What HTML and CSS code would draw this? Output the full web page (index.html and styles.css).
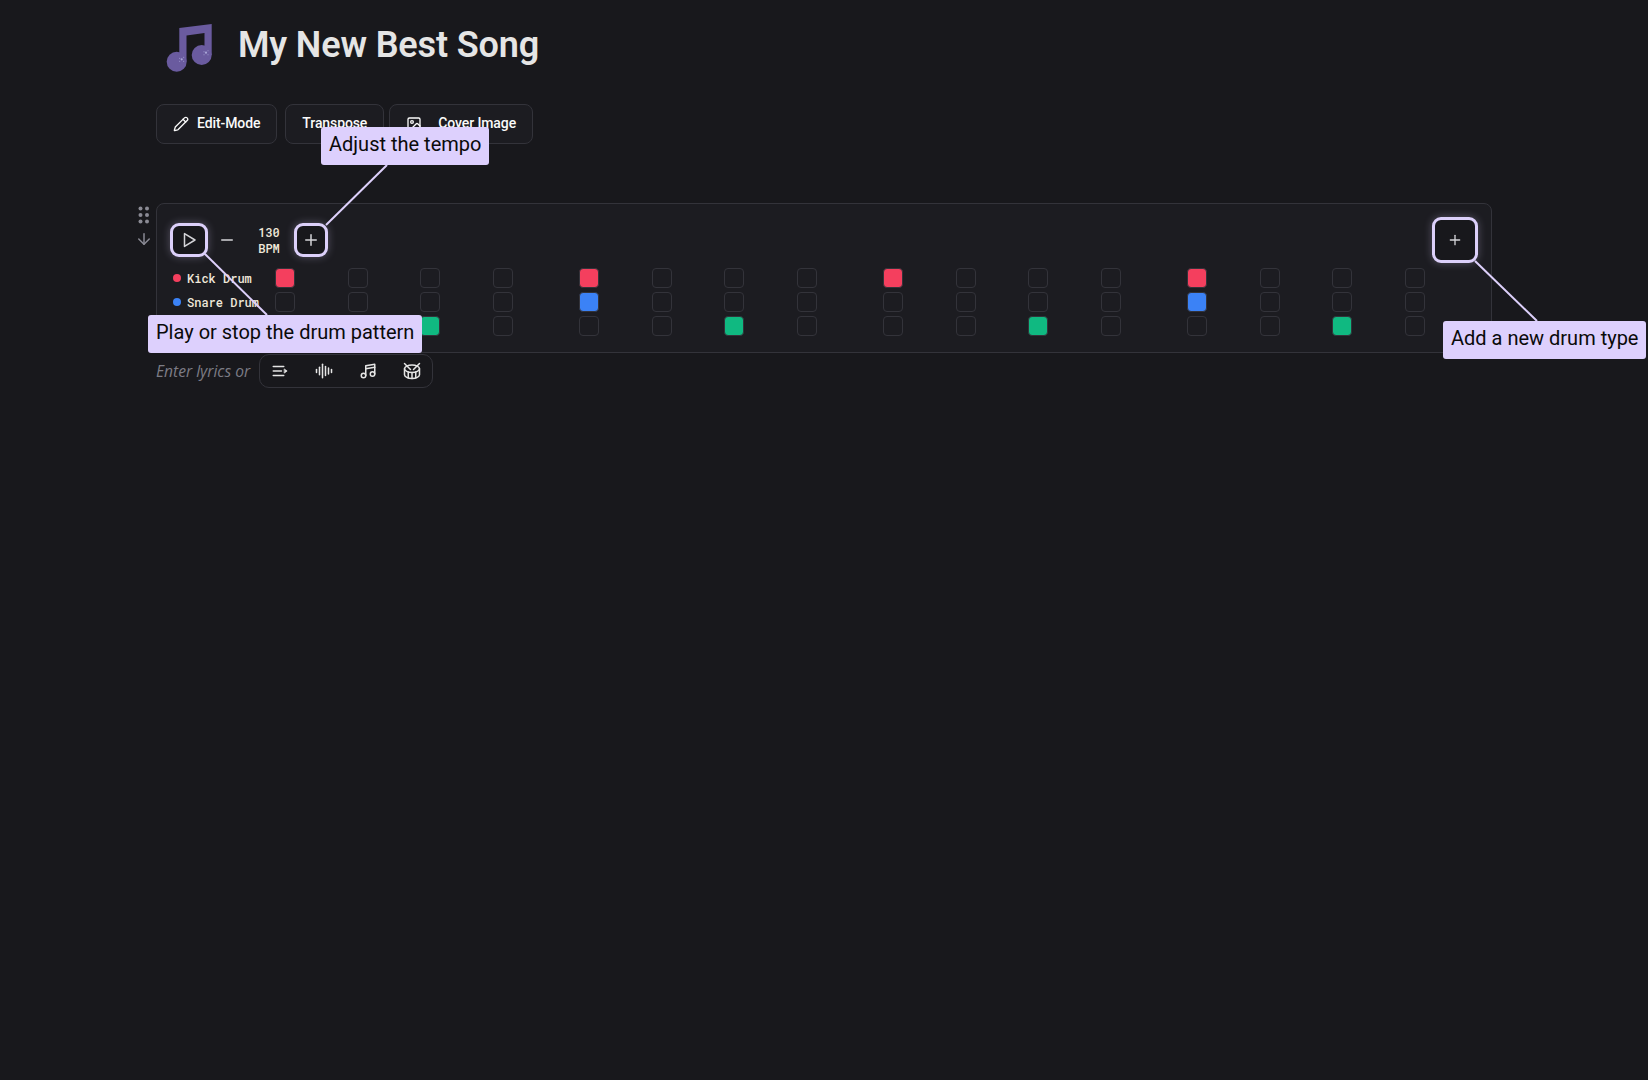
FILE: index.html
```html
<!DOCTYPE html>
<html>
<head>
    <title>My New Best Song</title>
    <link rel="stylesheet" href="styles.css">
</head>
<body>
    <div class="page">
        <div class="song_header">
            <svg class="song_icon" width="50" height="50" viewBox="0 0 50 50">
                <path fill="#6a5b9f" d="M14.3 6 46.7 2V33H39.5V11L21.5 13.5V39.5H14.3Z"/>
                <circle fill="#6a5b9f" cx="11.7" cy="39.7" r="10"/>
                <circle fill="#6a5b9f" cx="36.7" cy="33" r="10"/>
                <g fill="#a9a6d8">
                    <circle cx="16.7" cy="37.3" r="1.1"/>
                    <circle cx="14.7" cy="36.3" r=".5"/>
                    <circle cx="18.7" cy="39.3" r=".5"/>
                    <circle cx="18.7" cy="35.3" r=".5"/>
                    <circle cx="14.7" cy="39.3" r=".5"/>
                    <circle cx="41" cy="30.7" r="1.1"/>
                    <circle cx="39" cy="29.7" r=".5"/>
                    <circle cx="43" cy="32.7" r=".5"/>
                    <circle cx="43" cy="28.7" r=".5"/>
                    <circle cx="39" cy="32.7" r=".5"/>
                </g>
            </svg>
            <h1>My New Best Song</h1>
        </div>

        <div class="song_actions">
            <button class="action_btn">
                <svg class="icon" viewBox="0 0 24 24"><path d="M21.2 6.8a2.8 2.8 0 0 0-4-4L3.8 16.2a2 2 0 0 0-.5.8l-1.3 4.4a.5.5 0 0 0 .6.6l4.4-1.3a2 2 0 0 0 .8-.5z"/><path d="m15 5 4 4"/></svg>
                <span>Edit-Mode</span>
            </button>
            <button class="action_btn transpose_btn"><span>Transpose</span></button>
            <button class="action_btn wide_gap">
                <svg class="icon" viewBox="0 0 24 24"><rect x="3" y="3" width="18" height="18" rx="2"/><circle cx="9" cy="9" r="2"/><path d="m21 15-3.1-3.1a2 2 0 0 0-2.8 0L6 21"/></svg>
                <span>Cover Image</span>
            </button>
        </div>

        <div class="block_wrapper">
            <div class="block_handle">
                <svg width="12" height="18" viewBox="0 0 12 18" fill="#8a8a94">
                    <circle cx="2.5" cy="2.5" r="2"/><circle cx="9" cy="2.5" r="2"/>
                    <circle cx="2.5" cy="9" r="2"/><circle cx="9" cy="9" r="2"/>
                    <circle cx="2.5" cy="15.5" r="2"/><circle cx="9" cy="15.5" r="2"/>
                </svg>
                <svg class="icon handle_arrow" viewBox="0 0 24 24"><path d="M12 5v14"/><path d="m19 12-7 7-7-7"/></svg>
            </div>

            <div class="drum_card">
                <div class="drum_controls">
                    <button class="ctrl_btn highlighted play_btn">
                        <svg class="icon" viewBox="0 0 24 24"><path d="M6 3.5v17l14-8.5z"/></svg>
                    </button>
                    <button class="ctrl_btn minus_btn">
                        <svg class="icon" viewBox="0 0 24 24"><path d="M5 12h14"/></svg>
                    </button>
                    <div class="bpm">130<br>BPM</div>
                    <button class="ctrl_btn highlighted plus_btn">
                        <svg class="icon" viewBox="0 0 24 24"><path d="M5 12h14"/><path d="M12 5v14"/></svg>
                    </button>
                    <button class="ctrl_btn highlighted add_btn">
                        <svg class="icon" viewBox="0 0 24 24"><path d="M5 12h14"/><path d="M12 5v14"/></svg>
                    </button>
                </div>

                <div class="drum_row">
                    <div class="drum_label"><span class="dot kick"></span>Kick Drum</div>
                    <div class="beat_group"><span class="cell kick"></span><span class="cell"></span><span class="cell"></span><span class="cell"></span></div>
                    <div class="beat_group"><span class="cell kick"></span><span class="cell"></span><span class="cell"></span><span class="cell"></span></div>
                    <div class="beat_group"><span class="cell kick"></span><span class="cell"></span><span class="cell"></span><span class="cell"></span></div>
                    <div class="beat_group"><span class="cell kick"></span><span class="cell"></span><span class="cell"></span><span class="cell"></span></div>
                </div>
                <div class="drum_row">
                    <div class="drum_label"><span class="dot snare"></span>Snare Drum</div>
                    <div class="beat_group"><span class="cell"></span><span class="cell"></span><span class="cell"></span><span class="cell"></span></div>
                    <div class="beat_group"><span class="cell snare"></span><span class="cell"></span><span class="cell"></span><span class="cell"></span></div>
                    <div class="beat_group"><span class="cell"></span><span class="cell"></span><span class="cell"></span><span class="cell"></span></div>
                    <div class="beat_group"><span class="cell snare"></span><span class="cell"></span><span class="cell"></span><span class="cell"></span></div>
                </div>
                <div class="drum_row">
                    <div class="drum_label"><span class="dot hihat"></span>Hi-Hat</div>
                    <div class="beat_group"><span class="cell"></span><span class="cell"></span><span class="cell hihat"></span><span class="cell"></span></div>
                    <div class="beat_group"><span class="cell"></span><span class="cell"></span><span class="cell hihat"></span><span class="cell"></span></div>
                    <div class="beat_group"><span class="cell"></span><span class="cell"></span><span class="cell hihat"></span><span class="cell"></span></div>
                    <div class="beat_group"><span class="cell"></span><span class="cell"></span><span class="cell hihat"></span><span class="cell"></span></div>
                </div>
            </div>
        </div>

        <div class="lyrics_row">
            <span class="lyrics_hint">Enter lyrics or</span>
            <div class="block_picker">
                <button class="picker_btn">
                    <svg class="icon" viewBox="0 0 24 24"><path d="M3 6h14"/><path d="M3 12h11"/><path d="M3 18h14"/><path class="solid" d="M18 9.5l3.5 2.5-3.5 2.5z"/></svg>
                </button>
                <button class="picker_btn">
                    <svg class="icon" viewBox="0 0 24 24"><path d="M2 10v4"/><path d="M6 7v10"/><path d="M10 3v18"/><path d="M14 6v12"/><path d="M18 8v8"/><path d="M22 10v4"/></svg>
                </button>
                <button class="picker_btn">
                    <svg class="icon" viewBox="0 0 24 24"><path d="M9 18V5l12-2v13"/><path d="m9 9 12-2"/><circle cx="6" cy="18" r="3"/><circle cx="18" cy="16" r="3"/></svg>
                </button>
                <button class="picker_btn">
                    <svg class="icon" viewBox="0 0 24 24"><path d="m2 2 8 8"/><path d="m22 2-8 8"/><ellipse cx="12" cy="9" rx="10" ry="5"/><path d="M7 13.4v7.9"/><path d="M12 14v8"/><path d="M17 13.4v7.9"/><path d="M2 9v8a10 5 0 0 0 20 0V9"/></svg>
                </button>
            </div>
        </div>
    </div>

    <!-- guide lines from the tooltips to their buttons -->
    <svg class="guide_lines" width="1648" height="1080">
        <line x1="387" y1="165" x2="326" y2="225"/>
        <line x1="205" y1="254" x2="267" y2="315"/>
        <line x1="1475" y1="261" x2="1537" y2="321"/>
    </svg>
    <div class="tip tip_tempo">Adjust the tempo</div>
    <div class="tip tip_play">Play or stop the drum pattern</div>
    <div class="tip tip_add">Add a new drum type</div>
</body>
</html>
```

FILE: styles.css
```css
body {
    margin: 0;
    height: 1080px;
    overflow: hidden;
    position: relative;
    background-color: #18181c;
    color: #e5e5e5;
    font-family: Roboto, "Noto Sans", sans-serif;
}

button {
    font-family: inherit;
    color: inherit;
    background: none;
    border: none;
    padding: 0;
}

.page {
    width: 1336px;
    margin-left: 156px;
}

.icon {
    width: 18px;
    height: 18px;
    fill: none;
    stroke: currentColor;
    stroke-width: 2;
    stroke-linecap: round;
    stroke-linejoin: round;
    flex-shrink: 0;
}

.icon .solid {
    fill: currentColor;
    stroke-width: 1;
}

/* header */
.song_header {
    display: flex;
    align-items: center;
    height: 90px;
    padding-left: 9px;
    gap: 23px;
}

.song_icon {
    flex-shrink: 0;
    margin-top: 4px;
}

h1 {
    margin: 0;
    font-size: 36px;
    font-weight: 600;
    letter-spacing: -0.15px;
    line-height: 40px;
    color: #e5e5e5;
}

.song_actions {
    display: flex;
    gap: 8px;
    margin-top: 14px;
}

.action_btn {
    display: flex;
    align-items: center;
    gap: 8px;
    height: 40px;
    padding: 0 16px;
    box-sizing: border-box;
    border: 1px solid #33333a;
    border-radius: 8px;
    background-color: #1c1c21;
    color: #fafafa;
    font-size: 14px;
    font-weight: 500;
    letter-spacing: -0.1px;
}

.action_btn span {
    margin-bottom: 2px;
}

.action_btn .icon {
    width: 16px;
    height: 16px;
}

.transpose_btn {
    margin-right: -3px;
}

.action_btn.wide_gap {
    gap: 16px;
}

/* drum block */
.block_wrapper {
    position: relative;
    margin-top: 59px;
}

.block_handle {
    position: absolute;
    left: -18px;
    top: 3px;
    width: 12px;
    display: flex;
    flex-direction: column;
    align-items: center;
    gap: 6px;
    color: #8a8a94;
}

.drum_card {
    height: 150px;
    box-sizing: border-box;
    padding: 13px 13px 0;
    border: 1px solid #33333a;
    border-radius: 8px;
    background-color: #1c1c21;
}

.drum_controls {
    display: flex;
    align-items: center;
    height: 46px;
    margin-bottom: 5px;
}

.ctrl_btn {
    display: flex;
    align-items: center;
    justify-content: center;
    width: 34px;
    height: 34px;
    box-sizing: border-box;
    color: #d4d4d8;
}

.highlighted {
    border: 3px solid #dcd0fa;
    border-radius: 9px;
    background-color: #18181c;
    box-shadow: 0 0 8px rgba(221, 208, 251, 0.3);
}

.play_btn {
    width: 38px;
}

.minus_btn {
    margin-left: 2px;
}

.add_btn {
    width: 46px;
    height: 46px;
    margin-left: auto;
}

.add_btn .icon {
    width: 16px;
    height: 16px;
}

.bpm {
    width: 50px;
    text-align: center;
    font-family: "Roboto Mono", "DejaVu Sans Mono", monospace;
    font-size: 12px;
    font-weight: 500;
    line-height: 16px;
    color: #f0e8da;
}

.drum_row {
    display: flex;
    align-items: center;
    gap: 66.5px;
    height: 20px;
    margin-bottom: 4px;
}

.drum_label {
    display: flex;
    align-items: center;
    gap: 6px;
    width: 105px;
    margin-right: -66.5px;
    padding-left: 3px;
    box-sizing: border-box;
    font-family: "Roboto Mono", "DejaVu Sans Mono", monospace;
    font-size: 12px;
    font-weight: 500;
    color: #f0e8da;
    white-space: nowrap;
}

.dot {
    width: 8px;
    height: 8px;
    border-radius: 50%;
    flex-shrink: 0;
}

.beat_group {
    display: flex;
    justify-content: space-between;
    width: 237.5px;
}

.cell {
    width: 20px;
    height: 20px;
    box-sizing: border-box;
    border: 1px solid #33333a;
    border-radius: 4px;
}

.dot.kick, .cell.kick {
    background-color: #f43f5e;
}

.dot.snare, .cell.snare {
    background-color: #3b82f6;
}

.dot.hihat, .cell.hihat {
    background-color: #10b981;
}

/* lyrics line */
.lyrics_row {
    display: flex;
    align-items: center;
    gap: 9px;
    margin-top: 1px;
}

.lyrics_hint {
    width: 94px;
    font-family: "Open Sans", sans-serif;
    font-style: italic;
    font-size: 15.6px;
    color: #7c7c85;
    white-space: nowrap;
}

.block_picker {
    display: flex;
    gap: 4px;
    height: 34px;
    box-sizing: border-box;
    border: 1px solid #33333a;
    border-radius: 10px;
}

.picker_btn {
    display: flex;
    align-items: center;
    justify-content: center;
    width: 40px;
    color: #e5e5e5;
}

/* tutorial overlay */
.guide_lines {
    position: absolute;
    left: 0;
    top: 0;
}

.guide_lines line {
    stroke: #ddd0fb;
    stroke-width: 2;
}

.tip {
    position: absolute;
    height: 38px;
    padding: 0 8px;
    box-sizing: border-box;
    border-radius: 3px;
    background-color: #ddd0fd;
    color: #0a0a0a;
    font-size: 20px;
    line-height: 34px;
    white-space: nowrap;
}

.tip_tempo {
    left: 321px;
    top: 127px;
}

.tip_play {
    left: 148px;
    top: 315px;
}

.tip_add {
    left: 1443px;
    top: 321px;
}
```
